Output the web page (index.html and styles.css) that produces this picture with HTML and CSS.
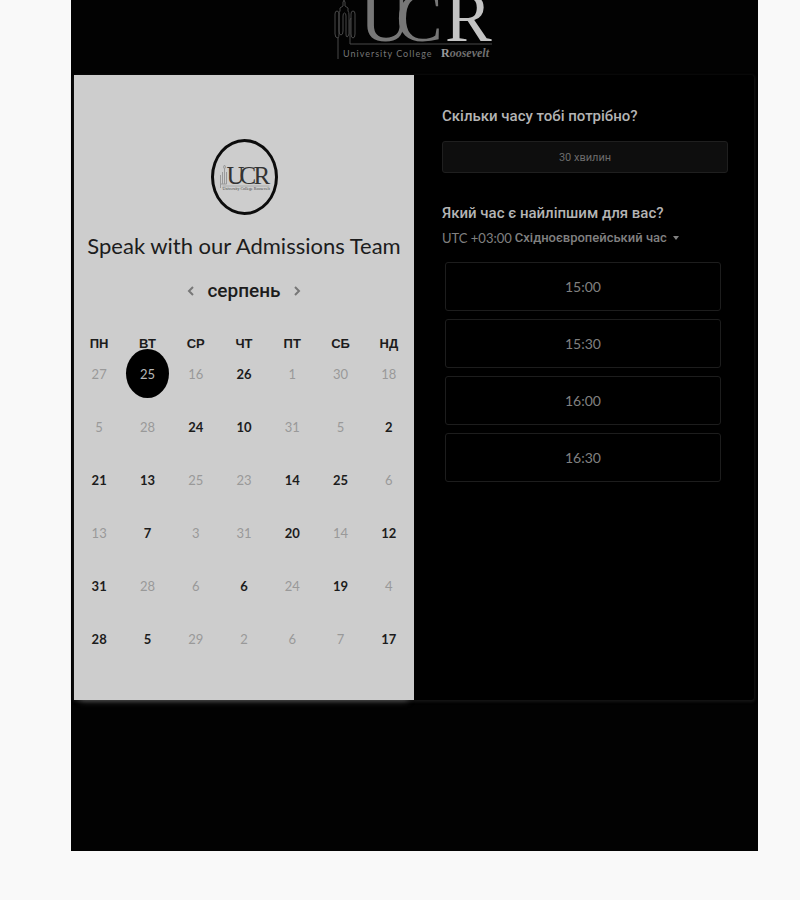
FILE: index.html
```html
<!DOCTYPE html>
<html lang="uk">
<head>
<meta charset="utf-8">
<meta name="viewport" content="width=device-width, initial-scale=1">
<title>Speak with our Admissions Team</title>
<link rel="stylesheet" href="styles.css">
</head>
<body>
<main class="page">
  <header class="brand">
    <svg class="brand-logo" viewBox="0 0 160 64" role="img" aria-label="University College Roosevelt">
      <g fill="none" stroke="#484848" stroke-width="1">
        <path d="M4 59V38Q1 38 1 34V14q0-3 2-3t2 3v20q0 3-1 4"/>
        <path d="M6 11V8l3-2V2l2-3M6 11q-1 1-1 4v16q0 4 2 4t2-4V16q0-3 1.500-3t1.500 3v18q0 3 1 3t2-3V15q0-3-1-4V8l-3-2V2l-2-3"/>
        <path d="M17 18v16q0 4 2 4t2-4V14q0-3-2-3t-2 3v4l-1 2v24h142"/>
      </g>
      <g class="logo-letters">
        <text x="26" y="41" fill="#777">U</text>
        <text x="62" y="41" fill="#777">C</text>
        <text x="111" y="41" fill="#c4c4c4">R</text>
      </g>
      <text class="logo-name" x="9" y="57">University College</text>
      <text class="logo-roosevelt" x="107" y="57">R<tspan font-style="italic" fill="#707070">oosevelt</tspan></text>
    </svg>
  </header>

  <div class="booking">
    <section class="calendar">
      <div class="badge">
        <svg viewBox="0 0 60 70" role="img" aria-label="UCR">
          <g fill="none" stroke="#999" stroke-width="1">
            <path d="M6 46V33M8 42V30M10 42V27l-1-2 1-2 1 2-1 2M12 42V30M6 42h6"/>
            <path d="M8 44h47" stroke="#aaa"/>
          </g>
          <g class="badge-letters">
            <text x="12" y="42">U</text>
            <text x="25" y="42">C</text>
            <text x="39" y="42">R</text>
          </g>
          <text class="badge-name" x="8" y="48">University College Roosevelt</text>
        </svg>
      </div>
      <h1 class="title">Speak with our Admissions Team</h1>
      <div class="month">
        <button class="arrow" type="button" aria-label="Попередній місяць">
          <svg viewBox="0 0 8 12"><path d="M6 2L2 6l4 4"/></svg>
        </button>
        <h2 class="month-name">серпень</h2>
        <button class="arrow" type="button" aria-label="Наступний місяць">
          <svg viewBox="0 0 8 12"><path d="M2 2l4 4-4 4"/></svg>
        </button>
      </div>
      <table class="days">
        <thead>
          <tr><th>ПН</th><th>ВТ</th><th>СР</th><th>ЧТ</th><th>ПТ</th><th>СБ</th><th>НД</th></tr>
        </thead>
        <tbody>
          <tr><td>27</td><td><button class="day selected" type="button">25</button></td><td>16</td><td><button class="day" type="button">26</button></td><td>1</td><td>30</td><td>18</td></tr>
          <tr><td>5</td><td>28</td><td><button class="day" type="button">24</button></td><td><button class="day" type="button">10</button></td><td>31</td><td>5</td><td><button class="day" type="button">2</button></td></tr>
          <tr><td><button class="day" type="button">21</button></td><td><button class="day" type="button">13</button></td><td>25</td><td>23</td><td><button class="day" type="button">14</button></td><td><button class="day" type="button">25</button></td><td>6</td></tr>
          <tr><td>13</td><td><button class="day" type="button">7</button></td><td>3</td><td>31</td><td><button class="day" type="button">20</button></td><td>14</td><td><button class="day" type="button">12</button></td></tr>
          <tr><td><button class="day" type="button">31</button></td><td>28</td><td>6</td><td><button class="day" type="button">6</button></td><td>24</td><td><button class="day" type="button">19</button></td><td>4</td></tr>
          <tr><td><button class="day" type="button">28</button></td><td><button class="day" type="button">5</button></td><td>29</td><td>2</td><td>6</td><td>7</td><td><button class="day" type="button">17</button></td></tr>
        </tbody>
      </table>
    </section>

    <section class="options">
      <h2 class="question">Скільки часу тобі потрібно?</h2>
      <button class="duration" type="button">30 хвилин</button>
      <h2 class="question">Який час є найліпшим для вас?</h2>
      <div class="timezone">
        <label for="zone">UTC +03:00</label>
        <select id="zone"><option>Східноєвропейський час</option></select>
        <svg class="caret" viewBox="0 0 6 4"><path d="M0 0h6L3 4z"/></svg>
      </div>
      <div class="slots">
        <button class="slot" type="button">15:00</button>
        <button class="slot" type="button">15:30</button>
        <button class="slot" type="button">16:00</button>
        <button class="slot" type="button">16:30</button>
      </div>
    </section>
  </div>
</main>
</body>
</html>
```
FILE: styles.css
```css
* {
  box-sizing: border-box;
}

body {
  margin: 0;
  background: #f9f9f9;
  font-family: Lato, "Liberation Sans", sans-serif;
}

button,
select {
  margin: 0;
  padding: 0;
  border: 0;
  background: none;
  color: inherit;
  font: inherit;
  cursor: pointer;
}

h1,
h2 {
  margin: 0;
}

.page {
  margin: 0 42px 48px 71px;
  padding: 0 4px 151px 3px;
  background: #020202;
}

.brand {
  display: flex;
  justify-content: center;
  height: 75px;
}

.brand-logo {
  width: 160px;
  height: 64px;
}

.logo-letters {
  font: 70px "Liberation Serif", serif;
}

.logo-name {
  font: 9px Lato, sans-serif;
  letter-spacing: 1px;
  fill: #777;
}

.logo-roosevelt {
  font: bold 12px "Liberation Serif", serif;
  fill: #999;
}

.booking {
  display: grid;
  grid-template-columns: 1fr 1fr;
  background: #000;
  border-radius: 3px;
  box-shadow: 0 1px 3px 1px #151515;
}

.calendar {
  padding: 64px 1px 18px;
  background: #cdcdcd;
  color: #1c1c1c;
  box-shadow: 0 7px 6px -6px #555;
}

.badge {
  width: 67px;
  height: 76px;
  margin: 0 auto;
  border: 3px solid #0c0c0c;
  border-radius: 50%;
}

.badge svg {
  display: block;
  width: 100%;
  height: 100%;
}

.badge-letters {
  font: 25px "Liberation Serif", serif;
  fill: #333;
}

.badge-name {
  font: 4px "Liberation Serif", serif;
  fill: #444;
}

.title {
  margin-top: 16px;
  font-size: 22px;
  font-weight: 400;
  line-height: 30px;
  text-align: center;
  white-space: nowrap;
}

.month {
  display: flex;
  justify-content: center;
  align-items: center;
  gap: 12px;
  margin-top: 16px;
}

.month-name {
  font: 500 19px/28px Roboto, sans-serif;
}

.arrow {
  display: flex;
  color: #777;
}

.arrow svg {
  width: 8px;
  height: 12px;
  fill: none;
  stroke: currentColor;
  stroke-width: 2;
}

.days {
  width: 100%;
  margin-top: 29px;
  border-collapse: collapse;
  table-layout: fixed;
  font-size: 13px;
  line-height: 20px;
  text-align: center;
}

.days th {
  height: 30px;
  padding: 0;
  vertical-align: top;
  font: bold 13px/20px "Liberation Sans", sans-serif;
}

.days td {
  height: 53px;
  padding: 0;
  vertical-align: top;
  color: #999;
}

.day {
  display: block;
  width: 43px;
  height: 20px;
  margin: 0 auto;
  color: #1c1c1c;
  font-weight: 700;
}

.day.selected {
  position: relative;
  height: 49px;
  margin: -15px auto -14px;
  border-radius: 50%;
  background: #000;
  color: #b8b8b8;
  font-weight: 400;
}

.options {
  padding: 31px 26px 31px 28px;
  color: #808080;
}

.question {
  color: #b4b4b4;
  font: 500 15px/20px Roboto, sans-serif;
}

.duration {
  display: block;
  width: 100%;
  height: 32px;
  margin: 15px 0 30px;
  border: 1px solid #1f1f1f;
  border-radius: 3px;
  background: #0e0e0e;
  color: #6c6c6c;
  font: 11px Roboto, sans-serif;
}

.timezone {
  display: flex;
  align-items: center;
  gap: 3px;
  margin-top: 5px;
  font-size: 13px;
  line-height: 20px;
  white-space: nowrap;
}

.timezone select {
  appearance: none;
  field-sizing: content;
  font: 500 13px/20px Roboto, sans-serif;
}

.caret {
  width: 6px;
  height: 4px;
  margin-left: 3px;
  fill: currentColor;
}

.slots {
  display: grid;
  gap: 8px;
  margin: 14px 7px 0 3px;
}

.slot {
  height: 49px;
  border: 1px solid #1d1d1d;
  border-radius: 3px;
  font-size: 14px;
}
```
